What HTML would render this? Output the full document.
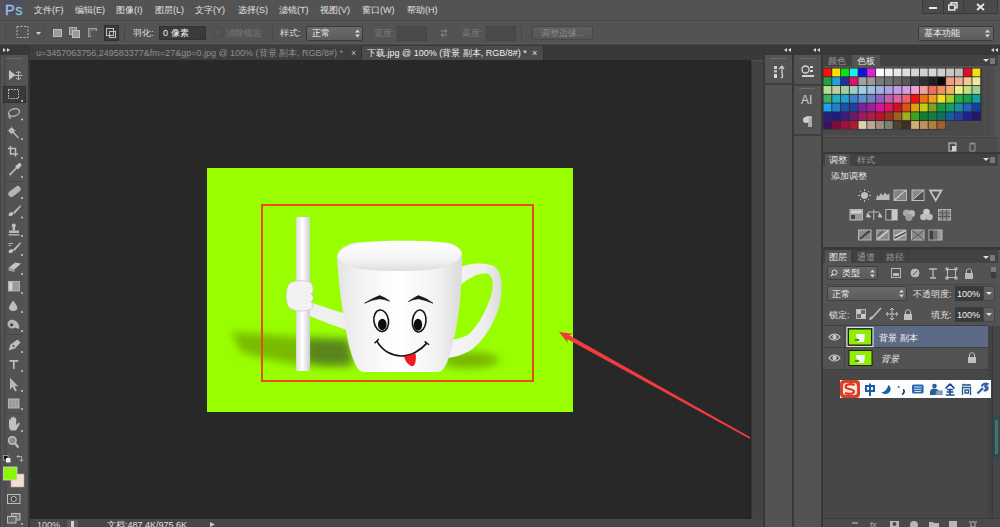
<!DOCTYPE html>
<html><head><meta charset="utf-8">
<style>
*{margin:0;padding:0;box-sizing:border-box}
html,body{width:1000px;height:527px;overflow:hidden;background:#535353;font-family:"Liberation Sans",sans-serif;color:#d8d8d8}
.a{position:absolute}
.t{position:absolute;white-space:nowrap;font-size:9px;line-height:10px}
svg{position:absolute;overflow:visible}
</style></head><body>
<!-- ===== menu bar ===== -->
<div class="a" style="left:0;top:0;width:1000px;height:20px;background:#535353"></div>
<div class="a" style="left:0;top:20px;width:1000px;height:1px;background:#454545"></div>
<div class="a" style="left:0;top:21px;width:1000px;height:1px;background:#595959"></div>
<div class="a" style="left:0;top:0;width:26px;height:17px;background:linear-gradient(90deg,#5a4f58,#4c5060 20%,#4b4f5e 80%,#535353)"></div>
<div class="t" style="left:5px;top:2px;font-size:14.5px;line-height:16px;font-weight:normal;color:#a4c0e4;letter-spacing:0.6px;-webkit-text-stroke:0.3px #a4c0e4">P<span style="color:#94bcd8;-webkit-text-stroke:0.3px #94bcd8">s</span></div>
<div class="t" id="menu" style="top:5px;left:0;color:#e0e0e0;font-size:9px">
<span class="t" style="left:34px;top:0">文件(F)</span>
<span class="t" style="left:75px;top:0">编辑(E)</span>
<span class="t" style="left:116px;top:0">图像(I)</span>
<span class="t" style="left:155px;top:0">图层(L)</span>
<span class="t" style="left:195px;top:0">文字(Y)</span>
<span class="t" style="left:238px;top:0">选择(S)</span>
<span class="t" style="left:279px;top:0">滤镜(T)</span>
<span class="t" style="left:320px;top:0">视图(V)</span>
<span class="t" style="left:362px;top:0">窗口(W)</span>
<span class="t" style="left:407px;top:0">帮助(H)</span>
</div>
<!-- window controls -->
<div class="a" style="left:922px;top:0;width:76px;height:14px;background:#4a4a4a;border:1px solid #3a3a3a;border-top:none"></div>
<div class="a" style="left:943px;top:0;width:1px;height:13px;background:#3a3a3a"></div>
<div class="a" style="left:963px;top:0;width:1px;height:13px;background:#3a3a3a"></div>
<div class="a" style="left:929px;top:7px;width:8px;height:2px;background:#e8e8e8"></div>
<svg style="left:948px;top:2px" width="10" height="9"><rect x="3" y="0.8" width="6" height="5" fill="none" stroke="#e8e8e8" stroke-width="1.5"/><rect x="0.8" y="3" width="6" height="5" fill="#4a4a4a" stroke="#e8e8e8" stroke-width="1.5"/></svg>
<svg style="left:976px;top:3px" width="9" height="8"><path d="M1 1L8 7M8 1L1 7" stroke="#e8e8e8" stroke-width="1.8"/></svg>

<!-- ===== options bar ===== -->
<div class="a" style="left:0;top:22px;width:1000px;height:21px;background:#535353"></div>
<div class="a" style="left:0;top:43px;width:1000px;height:1px;background:#5a5a5a"></div>
<div class="a" style="left:0;top:44px;width:1000px;height:1px;background:#454545"></div>
<!-- separators -->
<div class="a" style="left:5px;top:25px;width:1px;height:17px;background:#4a4a4a"></div>
<div class="a" style="left:43px;top:25px;width:1px;height:17px;background:#4a4a4a"></div>
<div class="a" style="left:124px;top:25px;width:1px;height:17px;background:#474747"></div>
<div class="a" style="left:272px;top:25px;width:1px;height:17px;background:#474747"></div>
<div class="a" style="left:521px;top:25px;width:1px;height:17px;background:#474747"></div>
<!-- marquee tool icon -->
<svg style="left:16px;top:25px" width="14" height="14"><rect x="1" y="1.5" width="11" height="11" fill="none" stroke="#b8b8b8" stroke-width="1" stroke-dasharray="2 1.5"/></svg>
<svg style="left:36px;top:32px" width="5" height="3"><path d="M0 0H5L2.5 3Z" fill="#d0d0d0"/></svg>
<!-- selection modes -->
<svg style="left:53px;top:28px" width="10" height="10"><rect x="0.5" y="1.5" width="8" height="7" fill="#9a9a9a" stroke="#bdbdbd"/></svg>
<svg style="left:69px;top:27px" width="12" height="12"><rect x="0.5" y="0.5" width="7" height="7" fill="#8a8a8a" stroke="#b0b0b0"/><rect x="3.5" y="3.5" width="7" height="7" fill="#9a9a9a" stroke="#c0c0c0"/></svg>
<svg style="left:88px;top:28px" width="10" height="10"><rect x="0.5" y="0.5" width="8" height="8" fill="#707070" stroke="#a0a0a0"/><rect x="3" y="3" width="6" height="6" fill="#535353"/></svg>
<div class="a" style="left:104px;top:25px;width:15px;height:16px;background:#3c3c3c;border:1px solid #2e2e2e"></div>
<svg style="left:106px;top:28px" width="11" height="11"><rect x="0.5" y="0.5" width="7" height="7" fill="none" stroke="#c0c0c0"/><rect x="3.5" y="3.5" width="6" height="6" fill="none" stroke="#c0c0c0"/></svg>
<div class="t" style="left:133px;top:28px;color:#dcdcdc">羽化:</div>
<div class="a" style="left:159px;top:26px;width:47px;height:14px;background:#3a3a3a;border:1px solid #333"></div>
<div class="t" style="left:163px;top:28px;color:#f0f0f0">0 像素</div>
<div class="a" style="left:214px;top:28px;width:9px;height:9px;background:#555;border:1px solid #4a4a4a;border-radius:2px"></div>
<div class="t" style="left:226px;top:28px;color:#7a7a7a">消除锯齿</div>
<div class="t" style="left:280px;top:28px;color:#dcdcdc">样式:</div>
<div class="a" style="left:306px;top:26px;width:57px;height:15px;background:linear-gradient(#6a6a6a,#5c5c5c);border:1px solid #3a3a3a;border-radius:2px"></div>
<div class="t" style="left:312px;top:28px;color:#f0f0f0">正常</div>
<svg style="left:355px;top:29px" width="5" height="9"><path d="M0 3.5L2.5 0.5L5 3.5ZM0 5.5L2.5 8.5L5 5.5Z" fill="#d8d8d8"/></svg>
<div class="t" style="left:374px;top:28px;color:#7e7e7e">宽度:</div>
<div class="a" style="left:397px;top:26px;width:30px;height:15px;background:#4a4a4a;border:1px solid #454545"></div>
<svg style="left:440px;top:28px" width="8" height="10"><path d="M1 3H7M5 1L7 3L5 5M7 7H1M3 5L1 7L3 9" fill="none" stroke="#8a8a8a" stroke-width="1"/></svg>
<div class="t" style="left:462px;top:28px;color:#7e7e7e">高度:</div>
<div class="a" style="left:486px;top:26px;width:30px;height:15px;background:#4a4a4a;border:1px solid #454545"></div>
<div class="a" style="left:532px;top:26px;width:61px;height:14px;background:linear-gradient(#5e5e5e,#565656);border:1px solid #484848;border-radius:2px"></div>
<div class="t" style="left:541px;top:28px;color:#8a8a8a">调整边缘...</div>
<div class="a" style="left:918px;top:26px;width:76px;height:15px;background:linear-gradient(#6a6a6a,#5c5c5c);border:1px solid #3a3a3a;border-radius:2px"></div>
<div class="t" style="left:924px;top:28px;color:#f0f0f0">基本功能</div>
<svg style="left:985px;top:29px" width="5" height="9"><path d="M0 3.5L2.5 0.5L5 3.5ZM0 5.5L2.5 8.5L5 5.5Z" fill="#d8d8d8"/></svg>

<!-- ===== tab bar ===== -->
<div class="a" style="left:0;top:45px;width:763px;height:15px;background:#393939"></div>
<div class="a" style="left:30px;top:45px;width:332px;height:15px;background:#3e3e3e;border-right:1px solid #313131"></div>
<div class="t" style="left:36px;top:48px;color:#8e8e8e">u=3457063756,249583377&amp;fm=27&amp;gp=0.jpg @ 100% (背景 副本, RGB/8#) *</div>
<div class="t" style="left:351px;top:48px;color:#c0c0c0;font-size:9px">×</div>
<div class="a" style="left:362px;top:45px;width:182px;height:15px;background:#4b4b4b;border-right:1px solid #333;border-top:1px solid #3a3a3a"></div>
<div class="t" style="left:367px;top:48px;color:#f0f0f0">下载.jpg @ 100% (背景 副本, RGB/8#) *</div>
<div class="t" style="left:532px;top:48px;color:#e0e0e0;font-size:9px">×</div>

<!-- ===== toolbar ===== -->
<div class="a" style="left:0;top:45px;width:28px;height:482px;background:#535353"></div>
<div class="a" style="left:0;top:45px;width:28px;height:10px;background:#383838"></div>

<div class="a" style="left:28px;top:45px;width:2px;height:482px;background:#383838"></div>


<!-- tool icons -->
<div class="a" style="left:0;top:55px;width:1px;height:472px;background:#464646"></div>
<div class="a" style="left:3px;top:55px;width:4px;height:472px;background:#4d4d4d"></div>
<div class="a" style="left:6px;top:58px;width:16px;height:1px;background:#6a6a6a"></div>
<svg style="left:0;top:0" width="30" height="527">
<!-- move -->
<path d="M9 70 L9 80 L15.5 75 Z" fill="#c4c4c4"/>
<path d="M18.5 71.5 V79.5 M15 75.5 H22.5 M16 73 L18.5 71.5 L21 73 M16 78 L18.5 79.5 L21 78" stroke="#b8b8b8" stroke-width="1" fill="none"/>
<!-- selected marquee bg -->
<rect x="3.5" y="86.5" width="22" height="16" fill="#3a3a3a" stroke="#2f2f2f" stroke-width="1"/>
<rect x="8.5" y="89.5" width="10" height="9" fill="none" stroke="#c8c8c8" stroke-dasharray="1.6 1.2"/>
<g fill="#c0c0c0">
<circle cx="22" cy="101" r="1.1"/>
<circle cx="22" cy="119.5" r="1.1"/>
<circle cx="22" cy="139" r="1.1"/>
<circle cx="22" cy="158" r="1.1"/>
<circle cx="22" cy="177" r="1.1"/>
<circle cx="22" cy="198" r="1.1"/>
<circle cx="22" cy="217.5" r="1.1"/>
<circle cx="22" cy="236" r="1.1"/>
<circle cx="22" cy="255" r="1.1"/>
<circle cx="22" cy="274" r="1.1"/>
<circle cx="22" cy="293" r="1.1"/>
<circle cx="22" cy="312" r="1.1"/>
<circle cx="22" cy="331" r="1.1"/>
<circle cx="22" cy="352" r="1.1"/>
<circle cx="22" cy="371" r="1.1"/>
<circle cx="22" cy="391" r="1.1"/>
<circle cx="22" cy="409" r="1.1"/>
<circle cx="22" cy="431" r="1.1"/>
</g>
<g fill="none" stroke="#b8b8b8" stroke-width="1.3">
<!-- lasso -->
<ellipse cx="14" cy="112.5" rx="5.6" ry="3.6" transform="rotate(-18 14 112.5)"/>
<path d="M9.5 115 C8.5 117 9.5 118.5 11 118"/>
<!-- wand -->
<path d="M13 132 L18.5 138" stroke-width="1.6"/>
</g>
<circle cx="11.6" cy="130.6" r="2.6" fill="#c8c8c8"/>
<path d="M11.6 126.5 V134.7 M7.5 130.6 H15.7" stroke="#a8a8a8" stroke-width="0.9"/>
<!-- crop -->
<path d="M10.5 146 V154 H18 M8 148.5 H15.5 V156.5" stroke="#bdbdbd" stroke-width="1.5" fill="none"/>
<!-- eyedropper -->
<path d="M9.5 175 L16.5 168" stroke="#b0b0b0" stroke-width="1.8"/>
<path d="M16 166.5 L19.5 163.5 L21 165 L18 168.5 Z" fill="#c8c8c8" stroke="#c8c8c8" stroke-width="1.2"/>
<rect x="5" y="181" width="18" height="1" fill="#464646"/>
<!-- healing -->
<rect x="7.5" y="188.5" width="14" height="6" rx="3" transform="rotate(-38 14.5 191.5)" fill="#b4b4b4"/>
<!-- brush -->
<path d="M20.5 205 L13 212.5 L14.5 214 L21 206.5 Z" fill="#bdbdbd"/>
<path d="M8.5 215.5 C9 212.5 11 211.5 13.5 213 C13 216 10.5 216.5 8.5 215.5 Z" fill="#c8c8c8"/>
<!-- stamp -->
<circle cx="13.8" cy="225.5" r="2" fill="#c0c0c0"/>
<rect x="12.6" y="226.5" width="2.4" height="4" fill="#c0c0c0"/>
<rect x="9" y="230.5" width="10" height="2.5" fill="#b8b8b8"/>
<rect x="8.5" y="234" width="11" height="1.6" fill="#a8a8a8"/>
<!-- history brush -->
<path d="M20.5 242 L13 249.5 L14.5 251 L21 243.5 Z" fill="#bdbdbd"/>
<path d="M8.5 252.5 C9 249.5 11 248.5 13.5 250 C13 253 10.5 253.5 8.5 252.5 Z" fill="#c8c8c8"/>
<path d="M8.5 243.5 H13 M8.5 245.5 H11" stroke="#b0b0b0" stroke-width="1"/>
<!-- eraser -->
<path d="M8.5 268 L15 262.5 L21 263.5 L14.5 269.5 Z" fill="#c4c4c4"/>
<path d="M8.5 268 L14.5 269.5 L14.5 272 L8.5 270.5 Z" fill="#a0a0a0"/>
<!-- gradient -->
<rect x="8.5" y="281.5" width="11" height="9.5" fill="#9a9a9a" stroke="#bdbdbd" stroke-width="0.8"/>
<rect x="9" y="282" width="3.5" height="8.5" fill="#d0d0d0"/>
<!-- blur -->
<path d="M13.2 300.5 C11 303.5 9 306 9 308 C9 310 11 311 13.2 311 C15.4 311 17.4 310 17.4 308 C17.4 306 15.4 303.5 13.2 300.5 Z" fill="#bdbdbd"/>
<!-- dodge -->
<path d="M7.5 324.8 C7.5 320 12 319 15 320.5 C18 322 20 326 19 329 L15 327.5 C14 329 9 329.5 7.5 324.8 Z" fill="#b8b8b8"/>
<circle cx="11.6" cy="324.8" r="1.6" fill="#3e3e3e"/>
<rect x="5" y="334" width="18" height="1" fill="#464646"/>
<!-- pen -->
<path d="M8.6 350.6 L10.5 344.5 L17.5 339.5 L20.5 342.5 L15 348.5 Z" fill="#bdbdbd"/>
<circle cx="13.5" cy="346" r="1.1" fill="#4a4a4a"/>
<!-- text -->
<path d="M9.4 360 H18.2 V361.8 H14.7 V369 H12.9 V361.8 H9.4 Z" fill="#bdbdbd"/>
<!-- path select -->
<path d="M10 377.7 V389.5 L12.7 387 L15 391.5 L16.8 390.6 L14.6 386.3 L18.2 386.3 Z" fill="#b8b8b8"/>
<!-- shape -->
<rect x="8.6" y="399" width="10.4" height="9" fill="#9c9c9c" stroke="#bdbdbd" stroke-width="0.9"/>
<path d="M12 399 V408 M15.5 399 V408" stroke="#b0b0b0" stroke-width="0.6"/>
<rect x="5" y="413" width="18" height="1" fill="#464646"/>
<!-- hand -->
<path d="M9 424 V420 C9 419 10.8 419 10.8 420 V423.5 V418 C10.8 417 12.6 417 12.6 418 V423.5 V417.2 C12.6 416.2 14.4 416.2 14.4 417.2 V423.5 V418.5 C14.4 417.5 16.2 417.5 16.2 418.5 V425 L18 423.2 C19 422.3 20.2 423.2 19.6 424.2 L16 430.5 H11 C9.5 429.5 9 427.5 9 424 Z" fill="#c0c0c0"/>
<!-- zoom -->
<circle cx="12.3" cy="440.5" r="3.8" fill="#8a8a8a" stroke="#bdbdbd" stroke-width="1.5"/>
<path d="M15.2 443.5 L18.4 447.5" stroke="#bdbdbd" stroke-width="2.2"/>
<!-- default colors / swap -->
<rect x="3.5" y="455.5" width="4.5" height="4.5" fill="#111" stroke="#bbb" stroke-width="0.7"/>
<rect x="6" y="458" width="4.5" height="4.5" fill="#eee"/>
<path d="M17 456.5 H21.5 V461 M19.8 459.5 L21.5 461.5 L23.2 459.5 M18.5 455 L17 456.5 L18.5 458" fill="none" stroke="#b8b8b8" stroke-width="0.9"/>
<!-- bg / fg -->
<rect x="11" y="474" width="13" height="13" fill="#f7dcd4" stroke="#a8a8a8" stroke-width="0.6"/>
<rect x="3.5" y="467" width="13.5" height="13" fill="#8af700" stroke="#d8d8d8" stroke-width="0.8"/>
<!-- quick mask -->
<rect x="7.5" y="494.5" width="12.5" height="9" fill="none" stroke="#bdbdbd" stroke-width="1"/>
<circle cx="13.7" cy="499" r="2.6" fill="#3e3e3e" stroke="#bdbdbd" stroke-width="1"/>
<!-- screen mode -->
<rect x="11.5" y="513.5" width="8.5" height="6.5" fill="#7a7a7a" stroke="#bdbdbd" stroke-width="1"/>
<rect x="7.5" y="516.5" width="8.5" height="6.5" fill="#6a6a6a" stroke="#bdbdbd" stroke-width="1"/>
<circle cx="22" cy="524" r="1" fill="#bbb"/>
</svg>
<!-- ===== canvas area ===== -->
<div class="a" style="left:30px;top:60px;width:720px;height:460px;background:#282828"></div>
<div class="a" style="left:749px;top:60px;width:2px;height:460px;background:#252525"></div>
<div class="a" style="left:752px;top:61px;width:11px;height:459px;background:#434343"></div>
<div class="a" style="left:751px;top:61px;width:1px;height:459px;background:#363636"></div>

<!-- ===== image ===== -->
<svg style="left:207px;top:168px" width="366" height="244" viewBox="0 0 366 244">
<defs>
<filter id="bl" x="-50%" y="-50%" width="200%" height="200%"><feGaussianBlur stdDeviation="4"/></filter>
<filter id="bl2" x="-50%" y="-50%" width="200%" height="200%"><feGaussianBlur stdDeviation="0.6"/></filter>
<linearGradient id="cupg" x1="0" x2="1" y1="0" y2="0"><stop offset="0" stop-color="#e4e4e4"/><stop offset="0.2" stop-color="#f4f4f4"/><stop offset="0.5" stop-color="#ffffff"/><stop offset="0.8" stop-color="#f2f2f2"/><stop offset="1" stop-color="#dadada"/></linearGradient>
<linearGradient id="rimg" x1="0" x2="0" y1="0" y2="1"><stop offset="0" stop-color="#ffffff"/><stop offset="0.6" stop-color="#f4f4f4"/><stop offset="1" stop-color="#dedede"/></linearGradient>
<linearGradient id="stg" x1="0" x2="1"><stop offset="0" stop-color="#dadada"/><stop offset="0.45" stop-color="#ffffff"/><stop offset="1" stop-color="#cfcfcf"/></linearGradient>
<linearGradient id="hg" x1="0" x2="1"><stop offset="0" stop-color="#f6f6f6"/><stop offset="0.7" stop-color="#efefef"/><stop offset="1" stop-color="#dadada"/></linearGradient>
</defs>
<rect width="366" height="244" fill="#99ff00"/>
<!-- shadows -->
<g filter="url(#bl)">
<path d="M24 164 C50 166 100 170 142 172 L146 198 C110 200 70 196 34 184 Z" fill="#6ea400" opacity="0.75"/>
<path d="M100 170 C118 170 132 171 142 171 L146 197 C126 199 110 198 100 194 Z" fill="#557f1c" opacity="0.9"/>
<ellipse cx="262" cy="192" rx="30" ry="8" fill="#6ea400" opacity="0.8"/>
</g>
<!-- red rect -->
<rect x="55" y="37" width="271" height="176" fill="none" stroke="#e84a1a" stroke-width="2"/>
<!-- stick -->
<rect x="89" y="49" width="14" height="154" rx="1.5" fill="url(#stg)"/>
<!-- handle -->
<path d="M250 101 C260 95 276 94 286 97.5 C296 103 296 120 293 135 C289 152 278 172 264 182 C256 187 246 190 236 190 L238 173 C246 172 255 170 261 167 C272 157 281 140 285 124 C287 113 285 106 279 105.5 C270 105 262 110 252 118 Z" fill="url(#hg)"/>
<!-- arm -->
<path d="M103 134 C114 138 126 142 139 146 L143 163 C128 158 114 153 103 148 Z" fill="#efefef"/>
<!-- cup body -->
<path d="M130 90 C130 82 138 76 150 74.5 C175 72 215 72 240 74.5 C250 76 256 82 255 92 C255 120 252 150 246 175 C242 192 238 202 232 204 L156 204 C150 203 146 192 142 178 C136 150 132 120 130 90 Z" fill="url(#cupg)"/>
<path d="M130.5 88 C133 79 148 74 193 73 C238 73 252 76 255 85 C251 99 232 103 193 103 C154 103 135 100 130.5 88 Z" fill="url(#rimg)"/>
<!-- hand -->
<path d="M82 116 C86 112 96 112 103 114 C107 118 107 124 104 126 C107 128 107 132 104 134 C107 136 107 140 102 142 C94 144 84 143 81 138 C78 130 79 121 82 116 Z" fill="#f2f2f2" stroke="#c4c4c4" stroke-width="0.7"/>
<!-- face -->
<g filter="url(#bl2)">
<path d="M157.6 135.2 Q165 130.5 172.7 127.6 Q178 129.5 182.8 133.2 Q177 131.3 172.7 130.8 Q165 131.8 157.6 135.2 Z" fill="#141414" stroke="#141414" stroke-width="0.6"/>
<path d="M201.4 133.6 Q206 130.2 211.4 127.6 Q219 130 226 135.2 Q218 132 211.4 130.8 Q206 131.3 201.4 133.6 Z" fill="#141414" stroke="#141414" stroke-width="0.6"/>
<ellipse cx="174.2" cy="152.7" rx="7.3" ry="10.8" fill="#fafafa" stroke="#141414" stroke-width="1.6" transform="rotate(-8 174.2 152.7)"/>
<ellipse cx="212.2" cy="153" rx="6.8" ry="11" fill="#fafafa" stroke="#141414" stroke-width="1.6" transform="rotate(6 212.2 153)"/>
<ellipse cx="175.3" cy="156.5" rx="4.3" ry="5.8" fill="#0a0a0a"/>
<ellipse cx="211" cy="156.8" rx="4.2" ry="6" fill="#0a0a0a"/>
<path d="M169.7 172.9 C176 184 186 188 194 188 C204 188 214 182 219.8 175.1" fill="none" stroke="#141414" stroke-width="1.7"/>
<path d="M167.6 175.2 L171.8 171 M217.6 173.4 L222 176.8" stroke="#141414" stroke-width="1.4"/>
<path d="M197 188.6 L208.6 185.6 C209.4 191 208.6 197 206 198.2 C202 198.6 198.4 193.6 197 188.6 Z" fill="#ee1c24"/>
</g>
</svg>
<!-- arrow -->
<svg style="left:0;top:0" width="1000" height="527">
<path d="M559.0 332.0 L572.9 333.8 L569.2 335.3 L750.4 437.2 L749.6 438.8 L567.2 338.9 L567.8 342.9 Z" fill="#f03c3c"/>
</svg>
<!-- status bar -->
<div class="a" style="left:30px;top:519px;width:733px;height:8px;background:#474747"></div>
<div class="t" style="left:37px;top:520px;color:#d8d8d8">100%</div>
<div class="a" style="left:67px;top:520px;width:11px;height:7px;background:#5c5c5c"></div>
<div class="a" style="left:71px;top:521px;width:3px;height:6px;background:#d0d0d0"></div>
<div class="t" style="left:107px;top:520px;color:#e0e0e0">文档:487.4K/975.6K</div>
<svg style="left:210px;top:522px" width="5" height="5"><path d="M0 0 L5 2.5 L0 5Z" fill="#ccc"/></svg>

<!-- ===== right columns ===== -->
<div class="a" style="left:763px;top:45px;width:237px;height:482px;background:#383838"></div>
<div class="a" style="left:765px;top:55px;width:27px;height:472px;background:#535353"></div>
<div class="a" style="left:794px;top:55px;width:27px;height:472px;background:#535353"></div>
<div class="a" style="left:823px;top:55px;width:177px;height:472px;background:#535353"></div>

<!-- column headers -->
<svg style="left:0;top:0" width="1000" height="60">
<g fill="#d8d8d8">
<path d="M784 50 L787 48 V52 Z M788 50 L791 48 V52 Z"/>
<path d="M813 50 L816 48 V52 Z M817 50 L820 48 V52 Z"/>
<path d="M991 50 L994 48 V52 Z M995 50 L998 48 V52 Z"/>
<path d="M6 50 L3 48 V52 Z M10 50 L7 48 V52 Z"/>
</g>
</svg>
<!-- col1 -->
<div class="a" style="left:770px;top:58px;width:16px;height:1px;background:#6c6c6c"></div>
<svg style="left:773px;top:65px" width="12" height="14"><rect x="1" y="1" width="3" height="3" fill="#cfcfcf"/><rect x="1" y="5" width="3" height="2.5" fill="#bbb"/><rect x="1" y="9" width="3" height="4" fill="#d8d8d8"/><path d="M6 4 L9 1 L11 4 M9 1 V7 C9 10 11 12 8 13" fill="none" stroke="#d0d0d0" stroke-width="1.3"/></svg>
<div class="a" style="left:765px;top:83px;width:27px;height:2px;background:#3e3e3e"></div>
<!-- col2 -->
<div class="a" style="left:799px;top:58px;width:16px;height:1px;background:#6c6c6c"></div>
<svg style="left:801px;top:65px" width="14" height="14"><circle cx="4.5" cy="4.5" r="3.5" fill="none" stroke="#d8d8d8" stroke-width="1.3"/><rect x="9" y="1" width="3" height="2" fill="#d8d8d8"/><rect x="9" y="5" width="3" height="2" fill="#d8d8d8"/><rect x="1" y="10" width="12" height="2" fill="#d0d0d0"/></svg>
<div class="a" style="left:794px;top:84px;width:27px;height:2px;background:#3e3e3e"></div>
<div class="a" style="left:799px;top:88px;width:16px;height:1px;background:#6c6c6c"></div>
<div class="t" style="left:801px;top:94px;font-size:12px;line-height:13px;color:#cfcfcf">AI</div>
<svg style="left:802px;top:116px" width="10" height="12"><path d="M4 1 H9 V11 M7 1 V11" fill="none" stroke="#d0d0d0" stroke-width="1.4"/><circle cx="4" cy="4" r="3" fill="#d0d0d0"/></svg>
<div class="a" style="left:794px;top:134px;width:27px;height:2px;background:#3e3e3e"></div>

<!-- ===== swatches panel ===== -->
<div class="a" style="left:823px;top:55px;width:175px;height:11px;background:#424242"></div>
<div class="t" style="left:828px;top:56px;color:#9a9a9a">颜色</div>
<div class="a" style="left:852px;top:55px;width:28px;height:11px;background:#535353"></div>
<div class="t" style="left:857px;top:56px;color:#e8e8e8">色板</div>
<svg style="left:983px;top:58px" width="12" height="6"><path d="M0 1 L3 4 L6 1 Z" fill="#ddd"/><path d="M7 1 H12 M7 3 H12 M7 5 H12" stroke="#ccc" stroke-width="0.8"/></svg>
<svg style="left:0;top:0" width="1000" height="527">
<rect x="823" y="67.5" width="162" height="68" fill="#4a4a4a"/><rect x="823" y="68" width="158.5" height="53" fill="#2e2e2e"/><rect x="823" y="120.5" width="123" height="9" fill="#2e2e2e"/>
<rect x="823.50" y="68.50" width="7.86" height="7.86" fill="#ff1010"/>
<rect x="832.26" y="68.50" width="7.86" height="7.86" fill="#ffe400"/>
<rect x="841.02" y="68.50" width="7.86" height="7.86" fill="#10e010"/>
<rect x="849.78" y="68.50" width="7.86" height="7.86" fill="#20f0f0"/>
<rect x="858.54" y="68.50" width="7.86" height="7.86" fill="#1010e0"/>
<rect x="867.30" y="68.50" width="7.86" height="7.86" fill="#e020e0"/>
<rect x="876.06" y="68.50" width="7.86" height="7.86" fill="#ffffff"/>
<rect x="884.82" y="68.50" width="7.86" height="7.86" fill="#f0f0f0"/>
<rect x="893.58" y="68.50" width="7.86" height="7.86" fill="#e6e6e6"/>
<rect x="902.34" y="68.50" width="7.86" height="7.86" fill="#dedede"/>
<rect x="911.10" y="68.50" width="7.86" height="7.86" fill="#d6d6d6"/>
<rect x="919.86" y="68.50" width="7.86" height="7.86" fill="#d0d0d0"/>
<rect x="928.62" y="68.50" width="7.86" height="7.86" fill="#d6d6d6"/>
<rect x="937.38" y="68.50" width="7.86" height="7.86" fill="#d0d0d0"/>
<rect x="946.14" y="68.50" width="7.86" height="7.86" fill="#c8c8c8"/>
<rect x="954.90" y="68.50" width="7.86" height="7.86" fill="#c0c0c0"/>
<rect x="963.66" y="68.50" width="7.86" height="7.86" fill="#e01020"/>
<rect x="972.42" y="68.50" width="7.86" height="7.86" fill="#f0e010"/>
<rect x="823.50" y="77.26" width="7.86" height="7.86" fill="#20a040"/>
<rect x="832.26" y="77.26" width="7.86" height="7.86" fill="#20a0e0"/>
<rect x="841.02" y="77.26" width="7.86" height="7.86" fill="#2030a0"/>
<rect x="849.78" y="77.26" width="7.86" height="7.86" fill="#e0106a"/>
<rect x="858.54" y="77.26" width="7.86" height="7.86" fill="#a0a0a0"/>
<rect x="867.30" y="77.26" width="7.86" height="7.86" fill="#9a9a9a"/>
<rect x="876.06" y="77.26" width="7.86" height="7.86" fill="#7a7a7a"/>
<rect x="884.82" y="77.26" width="7.86" height="7.86" fill="#707070"/>
<rect x="893.58" y="77.26" width="7.86" height="7.86" fill="#666666"/>
<rect x="902.34" y="77.26" width="7.86" height="7.86" fill="#585858"/>
<rect x="911.10" y="77.26" width="7.86" height="7.86" fill="#404040"/>
<rect x="919.86" y="77.26" width="7.86" height="7.86" fill="#303030"/>
<rect x="928.62" y="77.26" width="7.86" height="7.86" fill="#202020"/>
<rect x="937.38" y="77.26" width="7.86" height="7.86" fill="#0a0a0a"/>
<rect x="946.14" y="77.26" width="7.86" height="7.86" fill="#f0a080"/>
<rect x="954.90" y="77.26" width="7.86" height="7.86" fill="#f0b090"/>
<rect x="963.66" y="77.26" width="7.86" height="7.86" fill="#f0c890"/>
<rect x="972.42" y="77.26" width="7.86" height="7.86" fill="#f0e8a0"/>
<rect x="823.50" y="86.02" width="7.86" height="7.86" fill="#b0e090"/>
<rect x="832.26" y="86.02" width="7.86" height="7.86" fill="#c0d0a0"/>
<rect x="841.02" y="86.02" width="7.86" height="7.86" fill="#a0d0a0"/>
<rect x="849.78" y="86.02" width="7.86" height="7.86" fill="#a0d0c0"/>
<rect x="858.54" y="86.02" width="7.86" height="7.86" fill="#a0d0e0"/>
<rect x="867.30" y="86.02" width="7.86" height="7.86" fill="#a0c0e0"/>
<rect x="876.06" y="86.02" width="7.86" height="7.86" fill="#a0b0e0"/>
<rect x="884.82" y="86.02" width="7.86" height="7.86" fill="#b0a0e0"/>
<rect x="893.58" y="86.02" width="7.86" height="7.86" fill="#c0a0e0"/>
<rect x="902.34" y="86.02" width="7.86" height="7.86" fill="#d0a0e0"/>
<rect x="911.10" y="86.02" width="7.86" height="7.86" fill="#f0a0d0"/>
<rect x="919.86" y="86.02" width="7.86" height="7.86" fill="#f0a0a0"/>
<rect x="928.62" y="86.02" width="7.86" height="7.86" fill="#f07060"/>
<rect x="937.38" y="86.02" width="7.86" height="7.86" fill="#f09060"/>
<rect x="946.14" y="86.02" width="7.86" height="7.86" fill="#f0b070"/>
<rect x="954.90" y="86.02" width="7.86" height="7.86" fill="#f0f080"/>
<rect x="963.66" y="86.02" width="7.86" height="7.86" fill="#c0e080"/>
<rect x="972.42" y="86.02" width="7.86" height="7.86" fill="#a0d090"/>
<rect x="823.50" y="94.78" width="7.86" height="7.86" fill="#40b060"/>
<rect x="832.26" y="94.78" width="7.86" height="7.86" fill="#20b0c0"/>
<rect x="841.02" y="94.78" width="7.86" height="7.86" fill="#20a0d0"/>
<rect x="849.78" y="94.78" width="7.86" height="7.86" fill="#4080d0"/>
<rect x="858.54" y="94.78" width="7.86" height="7.86" fill="#6090d0"/>
<rect x="867.30" y="94.78" width="7.86" height="7.86" fill="#7080c0"/>
<rect x="876.06" y="94.78" width="7.86" height="7.86" fill="#9060c0"/>
<rect x="884.82" y="94.78" width="7.86" height="7.86" fill="#c060b0"/>
<rect x="893.58" y="94.78" width="7.86" height="7.86" fill="#e060a0"/>
<rect x="902.34" y="94.78" width="7.86" height="7.86" fill="#f06070"/>
<rect x="911.10" y="94.78" width="7.86" height="7.86" fill="#f01010"/>
<rect x="919.86" y="94.78" width="7.86" height="7.86" fill="#f07010"/>
<rect x="928.62" y="94.78" width="7.86" height="7.86" fill="#f0a020"/>
<rect x="937.38" y="94.78" width="7.86" height="7.86" fill="#f0e020"/>
<rect x="946.14" y="94.78" width="7.86" height="7.86" fill="#a0d020"/>
<rect x="954.90" y="94.78" width="7.86" height="7.86" fill="#20b040"/>
<rect x="963.66" y="94.78" width="7.86" height="7.86" fill="#10a050"/>
<rect x="972.42" y="94.78" width="7.86" height="7.86" fill="#10a0a0"/>
<rect x="823.50" y="103.54" width="7.86" height="7.86" fill="#20a0f0"/>
<rect x="832.26" y="103.54" width="7.86" height="7.86" fill="#2080d0"/>
<rect x="841.02" y="103.54" width="7.86" height="7.86" fill="#1a50b0"/>
<rect x="849.78" y="103.54" width="7.86" height="7.86" fill="#2040a0"/>
<rect x="858.54" y="103.54" width="7.86" height="7.86" fill="#8020a0"/>
<rect x="867.30" y="103.54" width="7.86" height="7.86" fill="#a020a0"/>
<rect x="876.06" y="103.54" width="7.86" height="7.86" fill="#e010a0"/>
<rect x="884.82" y="103.54" width="7.86" height="7.86" fill="#f01060"/>
<rect x="893.58" y="103.54" width="7.86" height="7.86" fill="#d01020"/>
<rect x="902.34" y="103.54" width="7.86" height="7.86" fill="#e05010"/>
<rect x="911.10" y="103.54" width="7.86" height="7.86" fill="#e0a010"/>
<rect x="919.86" y="103.54" width="7.86" height="7.86" fill="#c0d010"/>
<rect x="928.62" y="103.54" width="7.86" height="7.86" fill="#80a020"/>
<rect x="937.38" y="103.54" width="7.86" height="7.86" fill="#10a040"/>
<rect x="946.14" y="103.54" width="7.86" height="7.86" fill="#10a060"/>
<rect x="954.90" y="103.54" width="7.86" height="7.86" fill="#1090a0"/>
<rect x="963.66" y="103.54" width="7.86" height="7.86" fill="#2060c0"/>
<rect x="972.42" y="103.54" width="7.86" height="7.86" fill="#1040a0"/>
<rect x="823.50" y="112.30" width="7.86" height="7.86" fill="#202080"/>
<rect x="832.26" y="112.30" width="7.86" height="7.86" fill="#201a80"/>
<rect x="841.02" y="112.30" width="7.86" height="7.86" fill="#401a80"/>
<rect x="849.78" y="112.30" width="7.86" height="7.86" fill="#6a1a70"/>
<rect x="858.54" y="112.30" width="7.86" height="7.86" fill="#a01a60"/>
<rect x="867.30" y="112.30" width="7.86" height="7.86" fill="#b01a50"/>
<rect x="876.06" y="112.30" width="7.86" height="7.86" fill="#c01030"/>
<rect x="884.82" y="112.30" width="7.86" height="7.86" fill="#a03020"/>
<rect x="893.58" y="112.30" width="7.86" height="7.86" fill="#a06020"/>
<rect x="902.34" y="112.30" width="7.86" height="7.86" fill="#a0b020"/>
<rect x="911.10" y="112.30" width="7.86" height="7.86" fill="#40a020"/>
<rect x="919.86" y="112.30" width="7.86" height="7.86" fill="#108030"/>
<rect x="928.62" y="112.30" width="7.86" height="7.86" fill="#108040"/>
<rect x="937.38" y="112.30" width="7.86" height="7.86" fill="#107060"/>
<rect x="946.14" y="112.30" width="7.86" height="7.86" fill="#1060a0"/>
<rect x="954.90" y="112.30" width="7.86" height="7.86" fill="#2040a0"/>
<rect x="963.66" y="112.30" width="7.86" height="7.86" fill="#202090"/>
<rect x="972.42" y="112.30" width="7.86" height="7.86" fill="#201870"/>
<rect x="823.50" y="121.06" width="7.86" height="7.86" fill="#401060"/>
<rect x="832.26" y="121.06" width="7.86" height="7.86" fill="#800a40"/>
<rect x="841.02" y="121.06" width="7.86" height="7.86" fill="#a01040"/>
<rect x="849.78" y="121.06" width="7.86" height="7.86" fill="#b01a30"/>
<rect x="858.54" y="121.06" width="7.86" height="7.86" fill="#e0d0b0"/>
<rect x="867.30" y="121.06" width="7.86" height="7.86" fill="#c0a890"/>
<rect x="876.06" y="121.06" width="7.86" height="7.86" fill="#a09080"/>
<rect x="884.82" y="121.06" width="7.86" height="7.86" fill="#808070"/>
<rect x="893.58" y="121.06" width="7.86" height="7.86" fill="#504030"/>
<rect x="902.34" y="121.06" width="7.86" height="7.86" fill="#403020"/>
<rect x="911.10" y="121.06" width="7.86" height="7.86" fill="#d0b070"/>
<rect x="919.86" y="121.06" width="7.86" height="7.86" fill="#c09060"/>
<rect x="928.62" y="121.06" width="7.86" height="7.86" fill="#b08040"/>
<rect x="937.38" y="121.06" width="7.86" height="7.86" fill="#a06030"/>
</svg>
<div class="a" style="left:986px;top:67px;width:8px;height:69px;background:#4c4c4c;border-left:1px solid #454545"></div>
<div class="a" style="left:823px;top:137px;width:175px;height:15px;background:#4c4c4c;border-top:1px solid #474747"></div>
<svg style="left:948px;top:142px" width="10" height="10"><rect x="1" y="1" width="7" height="8" fill="none" stroke="#d0d0d0"/><rect x="4" y="4" width="4" height="5" fill="#d0d0d0"/></svg>
<svg style="left:968px;top:142px" width="9" height="10"><path d="M1 2 H8 M3 2 V1 H6 V2 M2 3 V9 H7 V3" fill="none" stroke="#a0a0a0" stroke-width="0.9"/></svg>
<div class="a" style="left:823px;top:152px;width:177px;height:2px;background:#383838"></div>

<!-- ===== adjustments panel ===== -->
<div class="a" style="left:823px;top:154px;width:175px;height:12px;background:#424242"></div>
<div class="a" style="left:825px;top:154px;width:25px;height:12px;background:#535353"></div>
<div class="t" style="left:829px;top:155px;color:#e8e8e8">调整</div>
<div class="t" style="left:857px;top:155px;color:#9a9a9a">样式</div>
<svg style="left:983px;top:157px" width="12" height="6"><path d="M0 1 L3 4 L6 1 Z" fill="#ddd"/><path d="M7 1 H12 M7 3 H12 M7 5 H12" stroke="#ccc" stroke-width="0.8"/></svg>
<div class="t" style="left:831px;top:171px;color:#e8e8e8">添加调整</div>
<svg style="left:0;top:0" width="1000" height="527">
<g fill="none" stroke="#c8c8c8" stroke-width="1">
<!-- row1 -->
<circle cx="864.5" cy="195.5" r="3" fill="#c0c0c0"/>
<path d="M864.5 189 V191 M864.5 200 V202 M858 195.5 H860 M869 195.5 H871 M860 191 L861.2 192.2 M867.8 198.8 L869 200 M869 191 L867.8 192.2 M861.2 198.8 L860 200" stroke="#b8b8b8"/>
<path d="M876 200 L877 195 L879 196.5 L881 193 L883 195.5 L885 192.5 L887 195 L889.5 193.5 L889.5 200 Z" fill="#b8b8b8" stroke="none"/>
<rect x="894" y="190" width="12.5" height="10.5" fill="#7e7e7e" stroke="#b8b8b8"/><path d="M894.5 200 C899 197 901 193 906 190.5" stroke="#d0d0d0" stroke-width="1.3"/><path d="M897 190 V200 M900 190 V200 M903 190 V200" stroke="#939393" stroke-width="0.5"/>
<rect x="912" y="190" width="12" height="10.5" fill="#8a8a8a" stroke="#c0c0c0"/><path d="M912.5 200 L923.5 190.5" stroke="#d8d8d8"/><path d="M913 200 L923.5 200 L923.5 191 Z" fill="#4e4e4e" stroke="none"/>
<path d="M930 190.5 H941.5 L935.7 200.5 Z" stroke="#c0c0c0" stroke-width="1.8"/>
<!-- row2 -->
<rect x="850" y="209.5" width="12.5" height="10.5" fill="#9a9a9a" stroke="#b8b8b8"/><rect x="851" y="210.5" width="10.5" height="3" fill="#d0d0d0" stroke="none"/><rect x="851" y="215" width="4" height="4" fill="#444" stroke="none"/>
<path d="M873.8 209.5 V220 M868 212 H879.5" stroke="#bbb"/><path d="M867.5 213 L866.5 217 H870.5 Z M879.5 213 L878.5 217 H882 Z" fill="#c0c0c0" stroke="#c0c0c0"/>
<rect x="885.8" y="209.5" width="11.5" height="10.5" fill="#4e4e4e" stroke="#b8b8b8"/><rect x="891.5" y="210" width="5.5" height="10" fill="#c8c8c8" stroke="none"/>
<circle cx="906.5" cy="213" r="3.5" fill="#a8a8a8" stroke="none"/><circle cx="911.5" cy="213.5" r="3.5" fill="#b8b8b8" stroke="none"/><circle cx="909" cy="217.5" r="3.5" fill="#9a9a9a" stroke="none"/>
<circle cx="926.5" cy="212" r="3.3" fill="#c8c8c8" stroke="none"/><circle cx="923.5" cy="217" r="3.3" fill="#c0c0c0" stroke="none"/><circle cx="929.5" cy="217" r="3.3" fill="#bdbdbd" stroke="none"/>
<rect x="938.5" y="209.5" width="12" height="10.5" fill="#888" stroke="#b8b8b8"/><path d="M938.5 213 H950.5 M938.5 216.5 H950.5 M942.5 209.5 V220 M946.5 209.5 V220" stroke="#5a5a5a"/>
<!-- row3 -->
<rect x="858.5" y="230" width="12.5" height="10" fill="#8a8a8a" stroke="#b8b8b8"/><path d="M860 239 C864 236 866 233 870 231" stroke="#444" stroke-width="2"/>
<rect x="876.8" y="230" width="12.2" height="10" fill="#8a8a8a" stroke="#b8b8b8"/><path d="M878 239 L888 231" stroke="#d0d0d0" stroke-width="1.6"/><path d="M877.5 236 L883 231" stroke="#5a5a5a" stroke-width="1.4"/>
<rect x="893.8" y="230" width="12.2" height="10" fill="#8a8a8a" stroke="#b8b8b8"/><path d="M895 236 L905 231 M894.5 240 L906 234" stroke="#d0d0d0" stroke-width="1.4"/><path d="M895 238 L905.5 232.5" stroke="#444" stroke-width="1.2"/>
<rect x="911.5" y="230" width="12.5" height="10" fill="#8a8a8a" stroke="#b8b8b8"/><path d="M911.5 230 L924 240 M924 230 L911.5 240" stroke="#5a5a5a"/>
<rect x="929" y="230" width="13" height="10" fill="#9a9a9a" stroke="#b8b8b8"/><rect x="929.5" y="230.5" width="4" height="9" fill="#3e3e3e" stroke="none"/><rect x="933.5" y="230.5" width="4" height="9" fill="#707070" stroke="none"/>
</g>
</svg>
<div class="a" style="left:823px;top:247px;width:177px;height:3px;background:#383838"></div>

<!-- ===== layers panel ===== -->
<div class="a" style="left:823px;top:250px;width:175px;height:13px;background:#424242"></div>
<div class="a" style="left:825px;top:250px;width:26px;height:13px;background:#535353"></div>
<div class="t" style="left:829px;top:252px;color:#e8e8e8">图层</div>
<div class="t" style="left:857px;top:252px;color:#9a9a9a">通道</div>
<div class="t" style="left:886px;top:252px;color:#9a9a9a">路径</div>
<div class="a" style="left:852px;top:252px;width:1px;height:10px;background:#3a3a3a"></div>
<div class="a" style="left:881px;top:252px;width:1px;height:10px;background:#3a3a3a"></div>
<div class="a" style="left:908px;top:252px;width:1px;height:10px;background:#3a3a3a"></div>
<svg style="left:983px;top:255px" width="12" height="6"><path d="M0 1 L3 4 L6 1 Z" fill="#ddd"/><path d="M7 1 H12 M7 3 H12 M7 5 H12" stroke="#ccc" stroke-width="0.8"/></svg>
<!-- filter row -->
<div class="a" style="left:827px;top:266px;width:51px;height:14px;background:linear-gradient(#666,#5a5a5a);border:1px solid #3e3e3e;border-radius:2px"></div>
<svg style="left:830px;top:269px" width="8" height="8"><circle cx="4.5" cy="3.5" r="2.5" fill="none" stroke="#ddd" stroke-width="1"/><path d="M3 5 L1 7" stroke="#ddd" stroke-width="1.2"/></svg>
<div class="t" style="left:842px;top:268px;color:#f0f0f0">类型</div>
<svg style="left:870px;top:269px" width="5" height="9"><path d="M0 3.5L2.5 0.5L5 3.5ZM0 5.5L2.5 8.5L5 5.5Z" fill="#d0d0d0"/></svg>
<svg style="left:0;top:0" width="1000" height="527">
<g fill="none" stroke="#b8b8b8" stroke-width="1">
<rect x="891.5" y="268.5" width="9" height="9"/><rect x="893" y="273" width="6" height="3" fill="#b8b8b8" stroke="none"/>
<circle cx="915" cy="273" r="4" fill="#b8b8b8"/><path d="M913 275 L917 271" stroke="#535353"/>
<path d="M929 269 H937 M933 269 V278 M930 278 H936" stroke-width="1.3"/>
<rect x="947.5" y="269.5" width="8" height="8"/><rect x="946" y="268" width="2" height="2" fill="#b8b8b8"/><rect x="955" y="268" width="2" height="2" fill="#b8b8b8"/><rect x="946" y="277" width="2" height="2" fill="#b8b8b8"/><rect x="955" y="277" width="2" height="2" fill="#b8b8b8"/>
<rect x="965" y="273" width="8" height="6" fill="#b8b8b8" stroke="none"/><path d="M966.5 273 V271 C966.5 268 971.5 268 971.5 271 V273"/>
</g>
<rect x="991" y="267" width="5" height="5" fill="#7a7a7a"/><rect x="991" y="272" width="5" height="6" fill="#3c3c3c"/>
</svg>
<div class="a" style="left:825px;top:284px;width:170px;height:1px;background:#474747"></div>
<!-- blend row -->
<div class="a" style="left:827px;top:286px;width:80px;height:15px;background:linear-gradient(#6a6a6a,#5c5c5c);border:1px solid #3e3e3e;border-radius:2px"></div>
<div class="t" style="left:832px;top:289px;color:#f0f0f0">正常</div>
<svg style="left:899px;top:289px" width="5" height="9"><path d="M0 3.5L2.5 0.5L5 3.5ZM0 5.5L2.5 8.5L5 5.5Z" fill="#d0d0d0"/></svg>
<div class="t" style="left:913px;top:289px;color:#e0e0e0">不透明度:</div>
<div class="a" style="left:955px;top:286px;width:28px;height:15px;background:#3a3a3a"></div>
<div class="t" style="left:957px;top:289px;color:#f0f0f0">100%</div>
<div class="a" style="left:983px;top:286px;width:12px;height:15px;background:#5e5e5e;border:1px solid #454545"></div>
<svg style="left:986px;top:292px" width="6" height="4"><path d="M0 0H6L3 3Z" fill="#ddd"/></svg>
<!-- lock row -->
<div class="t" style="left:829px;top:310px;color:#e0e0e0">锁定:</div>
<svg style="left:0;top:0" width="1000" height="527">
<rect x="856.5" y="309.5" width="9" height="9" fill="#6a6a6a" stroke="#b8b8b8"/><rect x="857" y="310" width="4" height="4" fill="#c8c8c8"/><rect x="861" y="314" width="4" height="4" fill="#c8c8c8"/>
<path d="M871 319 L881 308" stroke="#c0c0c0" stroke-width="1.6"/><path d="M870 320 C870 318 871 317 873 317" stroke="#c0c0c0" stroke-width="1.5" fill="none"/>
<path d="M892 308 V320 M886 314 H898 M890 310 L892 308 L894 310 M890 318 L892 320 L894 318 M888 312 L886 314 L888 316 M896 312 L898 314 L896 316" stroke="#c0c0c0" stroke-width="1" fill="none"/>
<rect x="904" y="314" width="8" height="6" fill="#c0c0c0"/><path d="M905.5 314 V312 C905.5 309 910.5 309 910.5 312 V314" stroke="#c0c0c0" fill="none"/>
</svg>
<div class="t" style="left:931px;top:310px;color:#e0e0e0">填充:</div>
<div class="a" style="left:955px;top:307px;width:28px;height:15px;background:#3a3a3a"></div>
<div class="t" style="left:957px;top:310px;color:#f0f0f0">100%</div>
<div class="a" style="left:983px;top:307px;width:12px;height:15px;background:#5e5e5e;border:1px solid #454545"></div>
<svg style="left:986px;top:313px" width="6" height="4"><path d="M0 0H6L3 3Z" fill="#ddd"/></svg>
<!-- layer rows -->
<div class="a" style="left:823px;top:325px;width:165px;height:1px;background:#3e3e3e"></div>
<div class="a" style="left:823px;top:326px;width:22px;height:21px;background:#535353;border-right:1px solid #454545"></div>
<div class="a" style="left:846px;top:326px;width:142px;height:21px;background:#5d6a85"></div>
<div class="a" style="left:823px;top:347px;width:165px;height:1px;background:#3e3e3e"></div>
<div class="a" style="left:823px;top:348px;width:22px;height:21px;background:#535353;border-right:1px solid #454545"></div>
<div class="a" style="left:846px;top:348px;width:142px;height:21px;background:#535353"></div>
<div class="a" style="left:823px;top:369px;width:165px;height:1px;background:#3e3e3e"></div>
<svg style="left:0;top:0" width="1000" height="527">
<g fill="none" stroke="#c8c8c8" stroke-width="1.1">
<path d="M829 337 C832 333 837 333 840 337 C837 341 832 341 829 337 Z"/><circle cx="834.5" cy="337" r="1.6" fill="#c8c8c8"/>
<path d="M829 358 C832 354 837 354 840 358 C837 362 832 362 829 358 Z"/><circle cx="834.5" cy="358" r="1.6" fill="#c8c8c8"/>
</g>
<rect x="847" y="327.5" width="26" height="19" fill="#1e1e1e" stroke="#e0e0e0" stroke-width="1.2"/>
<rect x="849" y="329.5" width="22" height="15" fill="#8ef000"/>
<path d="M856 334 H865 L864 342 H857 Z" fill="#f4f4f4"/><ellipse cx="857" cy="340" rx="2.5" ry="1.2" fill="#5a8a20"/>
<rect x="848.5" y="350" width="24" height="16" fill="#1e1e1e"/>
<rect x="849.5" y="351" width="22" height="14" fill="#8ef000"/>
<path d="M856 355 H865 L864 363 H857 Z" fill="#f4f4f4"/><ellipse cx="857" cy="361" rx="2.5" ry="1.2" fill="#5a8a20"/>
<rect x="968" y="357" width="8" height="6" fill="#c0c0c0"/><path d="M969.5 357 V355 C969.5 352 974.5 352 974.5 355 V357" stroke="#c0c0c0" fill="none"/>
</svg>
<div class="t" style="left:879px;top:333px;color:#f4f4f4">背景 副本</div>
<div class="t" style="left:881px;top:354px;color:#e8e8e8;font-style:italic">背景</div>

<!-- layer list empty -->
<div class="a" style="left:823px;top:370px;width:166px;height:148px;background:#474747"></div>
<!-- right scroll strip -->
<div class="a" style="left:988px;top:326px;width:4px;height:192px;background:#424242"></div>
<div class="a" style="left:992px;top:326px;width:1px;height:192px;background:#393939"></div>
<div class="a" style="left:993px;top:326px;width:7px;height:192px;background:#464646"></div>
<div class="a" style="left:993px;top:415px;width:7px;height:44px;background:#2f4a4c;border-radius:2px 0 0 2px"></div>
<div class="a" style="left:995px;top:420px;width:3px;height:34px;background:#4d6e70"></div>
<!-- sogou bar -->
<div class="a" style="left:840px;top:380px;width:151px;height:18px;background:#fbfcfd"></div>
<svg style="left:0;top:0" width="1000" height="527">
<rect x="840" y="380" width="20" height="18" rx="4" fill="#d9402a"/>
<rect x="843" y="383" width="14" height="12" rx="3" fill="#f8e8d8"/>
<path d="M854.5 385 C851 383.5 845.5 384 845.5 387 C845.5 389.5 854 388.5 854 391.5 C854 394 848 394.5 845 393" fill="none" stroke="#e03424" stroke-width="2.2"/>
<path d="M866 386 H874 V391 H866 Z" fill="none" stroke="#1a5ca6" stroke-width="2"/><path d="M870 383.5 V396" stroke="#1a5ca6" stroke-width="2"/>
<path d="M888.5 385 C887 389.5 885 392 881.5 392.5 C884 395 889.5 394.5 890.5 390 C891 388 890 386 888.5 385 Z" fill="#1a5ca6"/>
<circle cx="898.6" cy="387" r="1" fill="#506080"/>
<path d="M903 390 C904.5 390 904.8 392.5 902.2 394.5" stroke="#1a3a60" stroke-width="1.8" fill="none"/>
<rect x="912" y="384.5" width="11.6" height="9" rx="1.5" fill="#2a68b0"/>
<path d="M914 387 H921.5 M914 389.3 H921.5 M914.5 391.5 H921" stroke="#e8f0f8" stroke-width="0.9"/>
<circle cx="934.5" cy="386" r="2.3" fill="#2a5a98"/>
<path d="M930 393 C930 389.5 932 388.5 934.5 388.5 C936.5 388.5 938 389.5 938.5 391 L938.5 395 H930 Z" fill="#2a5a98"/>
<rect x="935.5" y="390.5" width="7" height="4.5" fill="#5a7ea8"/>
<path d="M936.5 392 H941.5 M936.5 393.8 H941.5" stroke="#dde6f0" stroke-width="0.6"/>
<path d="M950 383.8 L945.5 388.5 M950 383.8 L954.5 388.5 M947 389.5 H953 M946.5 392 H953.5 M950 389.5 V394.5 M945.8 395 H954.5" stroke="#1a4e90" stroke-width="1.7" fill="none"/>
<path d="M962 385 H971 M962.5 386.5 V395 M962.5 387.5 H970.5 V395 M965 390 H968.5 V393 H965 Z M963.5 384 L965 385.5 M968.5 384 L967.5 385.5" stroke="#2a5890" stroke-width="1.3" fill="none"/>
<path d="M977.5 393.5 L983 388 M982 386.5 C982 384 985 383 987.4 384 L985.2 386.3 L986 387.8 L987.6 387.5 C987.8 390 985.6 391 983.8 390" stroke="#2a64a8" stroke-width="2.2" fill="none"/>
</svg>

<!-- layers bottom bar -->
<div class="a" style="left:823px;top:518px;width:177px;height:9px;background:#4a4a4a;border-top:1px solid #3e3e3e"></div>
<svg style="left:0;top:0" width="1000" height="527">
<g fill="#b8b8b8">
<path d="M852 523 H858" stroke="#b8b8b8" stroke-width="1.2"/>
<text x="870" y="527" font-size="8" font-family="Liberation Sans, sans-serif" font-style="italic">fx</text>
<rect x="890" y="521" width="9" height="6"/><circle cx="894.5" cy="524" r="2" fill="#4a4a4a"/>
<circle cx="914" cy="525" r="4"/>
<path d="M929 522 H933 L934 523 H939 V527 H929 Z"/>
<rect x="949" y="521" width="8" height="6"/>
<path d="M969 522 H977 M971 523 V527 H975 V523" stroke="#b8b8b8" fill="none"/>
</g>
</svg>

</body></html>
